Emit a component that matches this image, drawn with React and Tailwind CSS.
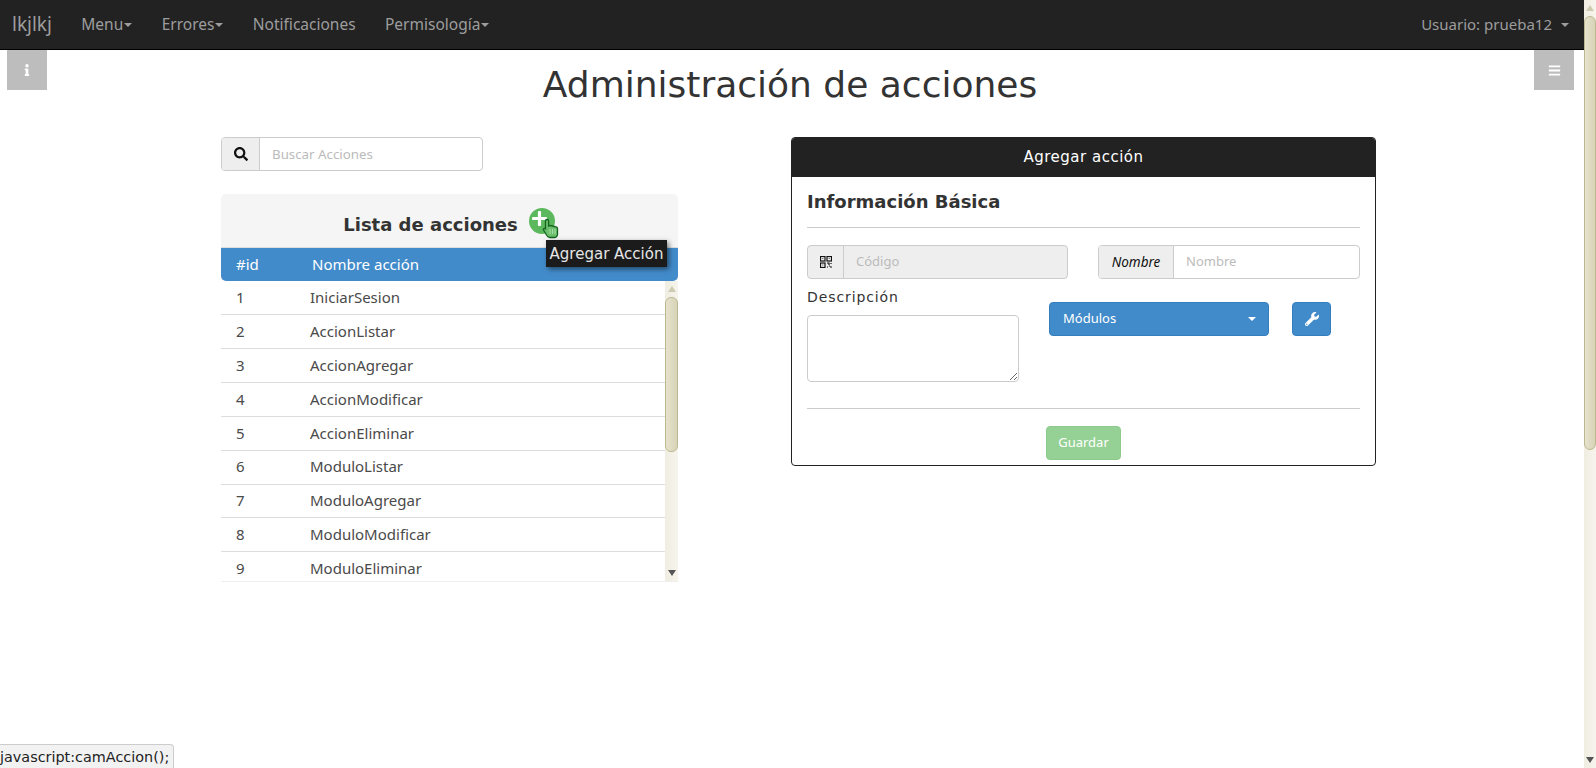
import { FaInfo, FaBars, FaSearch, FaWrench, FaPlus } from 'react-icons/fa'

const acciones = ['IniciarSesion', 'AccionListar', 'AccionAgregar', 'AccionModificar', 'AccionEliminar', 'ModuloListar', 'ModuloAgregar', 'ModuloModificar', 'ModuloEliminar']

const Caret = ({ className = '' }) => (
  <span className={'inline-block w-0 h-0 border-x-[4px] border-x-transparent border-t-[4px] border-t-current ' + className} />
)

const QrIcon = () => (
  <svg viewBox="0 0 12 12" className="w-[12px] h-[12px]" fill="none" stroke="#111" strokeWidth="1.200">
    <rect x="0.5" y="0.5" width="4.500" height="4.500" />
    <rect x="7" y="0.5" width="4.500" height="4.500" />
    <rect x="0.5" y="7" width="4.500" height="4.500" />
    <path d="M2.750 2.250v.5M9.250 2.250v.5M2.750 8.750v.5" strokeWidth="1.500" />
    <path d="M7 7h2v2M11 7v1M7 11h1M10 11h2M9.500 9.500v1" />
  </svg>
)

function NavItem({ label, caret }) {
  return (
    <a href="#" className="flex items-center text-[#9d9d9d] text-[15.5px]">
      {label}
      {caret && <Caret className="ml-px" />}
    </a>
  )
}

function Scrollbar({ className = '', thumb }) {
  return (
    <div className={'flex flex-col items-center bg-gradient-to-r from-[#f0eee2] to-[#f6f4ec] ' + className}>
      <div className="h-[16px] flex items-center justify-center shrink-0">
        <span className="w-0 h-0 border-x-[4px] border-x-transparent border-b-[6px] border-b-[#cfcbb0]" />
      </div>
      <div className={'w-full shrink-0 rounded-[6px] border border-[#bdb892] bg-gradient-to-r from-[#e6e2cd] to-[#d8d4b8] ' + thumb} />
      <div className="flex-1" />
      <div className="h-[16px] flex items-center justify-center shrink-0">
        <span className="w-0 h-0 border-x-[4px] border-x-transparent border-t-[6px] border-t-[#555]" />
      </div>
    </div>
  )
}

function AccionesList() {
  return (
    <div className="w-[457px]">
      <div className="flex items-center gap-[11px] justify-center h-[54px] pl-[2px] pr-[3px] bg-[#f5f5f5] rounded-t-[5px] border-b border-[#ddd] relative">
        <h3 className="font-['DejaVu_Sans',sans-serif] font-bold text-[18px] text-[#333] translate-y-[4px]">Lista de acciones</h3>
        <a href="#" className="w-[26px] h-[26px] rounded-full bg-[#5cb85c] flex items-center justify-center text-white text-[17px]"><FaPlus className="-translate-x-[2px] -translate-y-[2px]" /></a>
        <svg className="absolute left-[321px] top-[24px] w-[18px] h-[21px]" viewBox="0 0 18 21">
          <path d="M5 1.5c1 0 1.6.7 1.6 1.7V8l1-.4c.6-.2 1.2 0 1.5.4.7-.4 1.4-.2 1.8.3.8-.4 1.6-.1 2 .5.9-.3 2.6.2 2.6 1.7V16c0 2-1.500 3.500-3.500 3.500H8c-1.500 0-2.400-.8-3.200-2L1.500 12c-.6-1 .9-2.200 2-1.200V2.900c0-.8.6-1.400 1.500-1.400z" fill="#6cc06d" stroke="#14641f" strokeWidth="1.300" />
          <path d="M8 11v5M10.500 11v5M13 11v5" stroke="#a8dfa9" strokeWidth="1" />
        </svg>
        <div className="absolute left-[325px] top-[46px] w-[121px] h-[27px] pt-[2px] z-10 bg-[#1b1b1b] shadow-[2px_2px_5px_rgba(0,0,0,0.5)] flex items-center justify-center font-['DejaVu_Sans',sans-serif] text-[15px] text-[#e6e6e6] whitespace-nowrap">
          Agregar Acción
        </div>
      </div>
      <div className="flex items-center h-[33px] bg-[#428bca] rounded-b-[5px] text-white text-[15px]">
        <span className="w-[91px] pl-[15px]">#id</span>
        <span>Nombre acción</span>
      </div>
      <div className="flex h-[301px] border-b border-[#eee]">
        <div className="flex-1 overflow-hidden text-[#4a4a4a] text-[15px]">
          {acciones.map((nombre, i) => (
            <div key={nombre} className="flex items-center h-[33.86px] pb-[1px] border-b border-[#ddd] first:h-[34.3px] last:border-b-0">
              <span className="w-[89px] pl-[15px]">{i + 1}</span>
              <span>{nombre}</span>
            </div>
          ))}
        </div>
        <Scrollbar className="w-[13px]" thumb="h-[155px]" />
      </div>
    </div>
  )
}

function AgregarPanel() {
  return (
    <div className="w-[585px] h-[329px] border border-[#222] rounded-[4px] flex flex-col">
      <div className="h-[39px] shrink-0 bg-[#222] rounded-t-[3px] flex items-center justify-center text-white text-[15px] tracking-[0.5px] font-['DejaVu_Sans',sans-serif]">
        Agregar acción
      </div>
      <div className="px-[15px] flex-1 flex flex-col">
        <h4 className="font-['DejaVu_Sans',sans-serif] font-bold text-[18px] text-[#333] h-[51px] pb-[2px] flex items-center border-b border-[#ccc]">Información Básica</h4>
        <div className="flex justify-between mt-[17px]">
          <div className="flex w-[261px] h-[34px] border border-[#ccc] rounded-[4px] bg-[#eee]">
            <span className="w-[36px] flex items-center justify-center border-r border-[#ccc]"><QrIcon /></span>
            <input disabled placeholder="Código" className="min-w-0 flex-1 px-3 bg-transparent text-[13px] placeholder:text-[#bbb] outline-none" />
          </div>
          <div className="flex w-[262px] h-[34px] border border-[#ccc] rounded-[4px] overflow-hidden">
            <span className="w-[75px] flex items-center justify-center border-r border-[#ccc] bg-[#eee] italic text-[#111] text-[13.5px]">Nombre</span>
            <input placeholder="Nombre" className="min-w-0 flex-1 px-3 text-[13px] placeholder:text-[#bbb] outline-none" />
          </div>
        </div>
        <div className="flex mt-[9px] h-[94px]">
          <div className="w-[212px]">
            <label className="block h-[27px] font-['DejaVu_Sans',sans-serif] text-[14px] tracking-[0.9px] leading-[18px] text-[#333]">Descripción</label>
            <textarea className="block w-[212px] h-[67px] border border-[#ccc] rounded-[4px] outline-none" />
          </div>
          <div className="ml-[30px] mt-[14px] flex gap-[23px]">
            <button className="w-[220px] h-[34px] bg-[#428bca] border border-[#357ebd] rounded-[4px] px-[13px] flex items-center justify-between text-white text-[13px]">
              Módulos
              <Caret className="mr-[-1px]" />
            </button>
            <button className="w-[39px] h-[34px] bg-[#428bca] border border-[#357ebd] rounded-[4px] flex items-center justify-center text-white text-[14px]"><FaWrench /></button>
          </div>
        </div>
        <div className="mt-[26px] border-t border-[#ccc] pt-[17px] flex justify-center">
          <button className="w-[75px] h-[34px] bg-[#95d195] border border-[#8ccb8c] rounded-[4px] text-white text-[13px]">Guardar</button>
        </div>
      </div>
    </div>
  )
}

export default function App() {
  return (
    <div className="h-screen flex overflow-hidden bg-white font-['Noto_Sans',sans-serif] relative">
      <div className="flex-1 min-w-0 relative">
        <nav className="h-[50px] bg-[#222] border-b border-black flex items-center justify-between pl-[12px] pr-[15px]">
          <div className="flex items-center gap-[29.4px]">
            <a href="#" className="text-[#9d9d9d] text-[19px]">lkjlkj</a>
            <NavItem label="Menu" caret />
            <NavItem label="Errores" caret />
            <NavItem label="Notificaciones" />
            <NavItem label="Permisología" caret />
          </div>
          <a href="#" className="flex items-center gap-[9px] text-[#9d9d9d] text-[15px]">
            Usuario: prueba12
            <Caret />
          </a>
        </nav>
        <a href="#" className="absolute left-[7px] top-[50px] w-[40px] h-[40px] bg-[#bdbdbd] flex items-center justify-center text-white text-[12px]"><FaInfo /></a>
        <a href="#" className="absolute right-[10px] top-[50px] w-[40px] h-[40px] bg-[#bdbdbd] flex items-center justify-center text-white text-[13px]"><FaBars /></a>

        <h1 className="text-center font-['DejaVu_Sans',sans-serif] text-[36px] leading-[42px] text-[#333] mt-[14px] pr-[4px]">Administración de acciones</h1>

        <div className="flex justify-between pl-[221px] pr-[208px] mt-[31px]">
          <div>
            <div className="flex w-[262px] h-[34px] border border-[#ccc] rounded-[4px] overflow-hidden">
              <span className="w-[38px] flex items-center justify-center bg-[#eee] border-r border-[#ccc] text-[#111] text-[14px]"><FaSearch /></span>
              <input placeholder="Buscar Acciones" className="min-w-0 flex-1 px-3 text-[13.3px] placeholder:text-[#bbb] outline-none translate-y-px" />
            </div>
            <div className="mt-[23px]"><AccionesList /></div>
          </div>
          <AgregarPanel />
        </div>
      </div>
      <Scrollbar className="w-[12px] shrink-0" thumb="h-[434px]" />
      <div className="absolute left-0 bottom-0 w-[174px] h-[24px] pt-[2px] bg-[#f2f2f2] border-t border-r border-[#ccc] rounded-tr-[4px] flex items-center font-['DejaVu_Sans',sans-serif] text-[14.4px] text-[#222] whitespace-nowrap">
        javascript:camAccion();
      </div>
    </div>
  )
}
